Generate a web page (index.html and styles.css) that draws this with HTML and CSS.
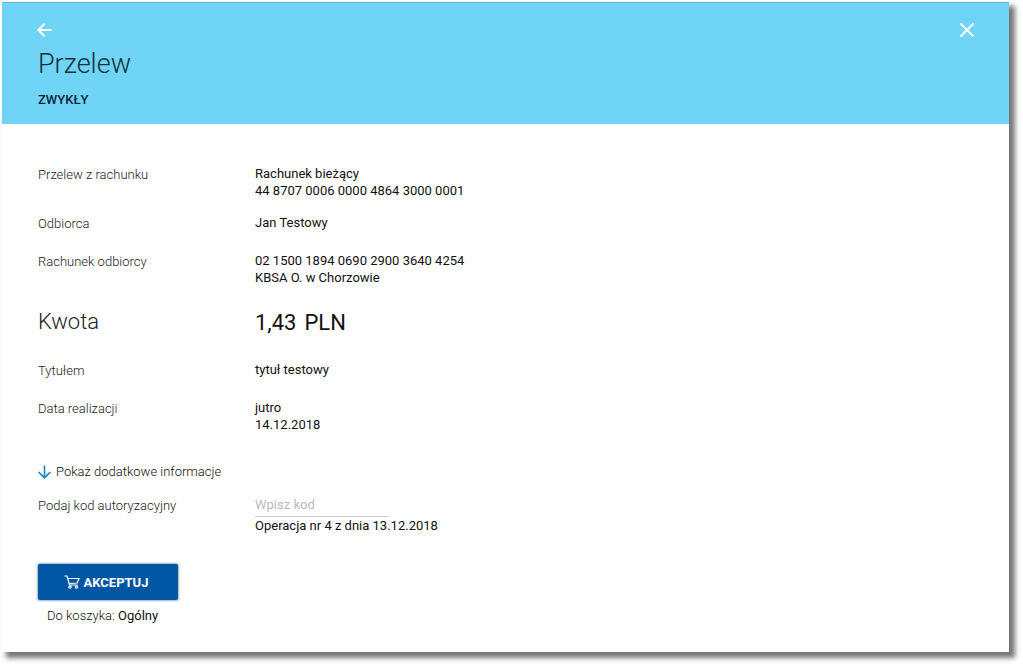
FILE: index.html
```html
<!DOCTYPE html>
<html lang="pl">
<head>
<meta charset="utf-8">
<title>Przelew</title>
<link rel="stylesheet" href="styles.css">
</head>
<body>
<main class="card">
  <header class="header">
    <div class="header-actions">
      <button class="icon-button" type="button" aria-label="Wstecz">
        <svg width="16" height="16" viewBox="0 0 16 16" fill="none" stroke="currentColor" stroke-width="2"><path d="M14.5 8H2M7.5 1.8L1.3 8L7.5 14.2"/></svg>
      </button>
      <button class="icon-button" type="button" aria-label="Zamknij">
        <svg width="16" height="16" viewBox="0 0 16 16" fill="none" stroke="currentColor" stroke-width="2"><path d="M1.5 1.5L14.5 14.5M14.5 1.5L1.5 14.5"/></svg>
      </button>
    </div>
    <h1 class="title">Przelew</h1>
    <p class="subtitle">ZWYKŁY</p>
  </header>
  <form class="content">
    <dl class="details">
      <div class="row"><dt class="label">Przelew z rachunku</dt><dd class="value">Rachunek bieżący<br>44 8707 0006 0000 4864 3000 0001</dd></div>
      <div class="row"><dt class="label">Odbiorca</dt><dd class="value">Jan Testowy</dd></div>
      <div class="row"><dt class="label">Rachunek odbiorcy</dt><dd class="value">02 1500 1894 0690 2900 3640 4254<br>KBSA O. w Chorzowie</dd></div>
      <div class="row row-amount"><dt class="label">Kwota</dt><dd class="value amount"><span>1,43</span><span>PLN</span></dd></div>
      <div class="row"><dt class="label">Tytułem</dt><dd class="value">tytuł testowy</dd></div>
      <div class="row"><dt class="label">Data realizacji</dt><dd class="value">jutro<br>14.12.2018</dd></div>
    </dl>
    <button class="more" type="button">
      <svg class="more-icon" width="13" height="14" viewBox="0 0 13 14" fill="none" stroke="currentColor" stroke-width="1.6"><path d="M6.5 0.5V12.5M0.6 7L6.5 12.9L12.4 7"/></svg>
      <span>Pokaż dodatkowe informacje</span>
    </button>
    <div class="row">
      <label class="label" for="code">Podaj kod autoryzacyjny</label>
      <div class="value">
        <input class="code" id="code" type="text" placeholder="Wpisz kod">
        <p class="hint">Operacja nr 4 z dnia 13.12.2018</p>
      </div>
    </div>
    <button class="accept" type="submit">
      <svg width="16" height="14" viewBox="0 0 16 14" fill="none" stroke="currentColor" stroke-width="1.2"><path d="M0.5 1H3L5.5 10H13.5M3.8 3.5H15L13.2 8L5 8.5"/><circle cx="6" cy="12" r="1.2"/><circle cx="12.5" cy="12" r="1.2"/></svg>
      <span>AKCEPTUJ</span>
    </button>
    <p class="basket"><span class="basket-label">Do koszyka:</span> Ogólny</p>
  </form>
</main>
</body>
</html>
```
FILE: styles.css
```css
* {
  box-sizing: border-box;
}

body {
  margin: 0;
  padding: 2px 14px 14px 2px;
  background: #fff;
  color: #111;
  font: 13px/17px Roboto, "Noto Sans", sans-serif;
}

h1, p, dl, dd {
  margin: 0;
}

button {
  border: 0;
  padding: 0;
  background: none;
  color: inherit;
  font: inherit;
  cursor: pointer;
}

.card {
  background: #fff;
  box-shadow: 5px 5px 5px 1px #777;
}

.header {
  padding: 19px 34px 16px 35px;
  background: #70d4f7;
  border-top: 1px solid #62b9d8;
}

.header-actions {
  display: flex;
  justify-content: space-between;
  height: 16px;
}

.icon-button {
  display: flex;
  color: #fff;
}

.title {
  margin: 9px 0 0 1px;
  color: #12303c;
  font-size: 27px;
  font-weight: 300;
  line-height: 34px;
}

.subtitle {
  margin: 10px 0 0 1px;
  color: #0c2733;
  font-weight: 500;
}

.content {
  padding: 41px 36px 28px;
}

.details {
  display: grid;
  gap: 15px;
}

.row {
  display: grid;
  grid-template-columns: 217px 1fr;
  min-height: 23px;
}

.label {
  padding-top: 1px;
  color: #222;
  font-weight: 300;
}

.row-amount {
  align-items: center;
  min-height: 45px;
  padding-bottom: 2px;
  font-size: 22px;
  line-height: 28px;
}

.row-amount .label {
  padding: 0 0 2px;
}

.amount {
  display: flex;
  gap: 8px;
}

.more {
  display: flex;
  align-items: center;
  gap: 5px;
  margin-top: 30px;
  font-weight: 300;
}

.more-icon {
  color: #1287c9;
}

.more + .row {
  margin-top: 16px;
}

.code {
  display: block;
  width: 134px;
  height: 21px;
  padding: 0 0 3px;
  border: 0;
  border-bottom: 1px solid #ccc;
  background: none;
  color: inherit;
  font: inherit;
}

.code::placeholder {
  color: #bbb;
}

.accept {
  display: flex;
  align-items: center;
  justify-content: center;
  gap: 4px;
  width: 140px;
  height: 36px;
  padding-right: 4px;
  margin-top: 30px;
  border-radius: 2px;
  background: #0056a3;
  box-shadow: 0 0 2px 1px #9ab4c8;
  color: #fff;
  font-weight: 700;
}

.basket {
  margin: 7px 9px 0;
}

.basket-label {
  font-weight: 300;
}
```
